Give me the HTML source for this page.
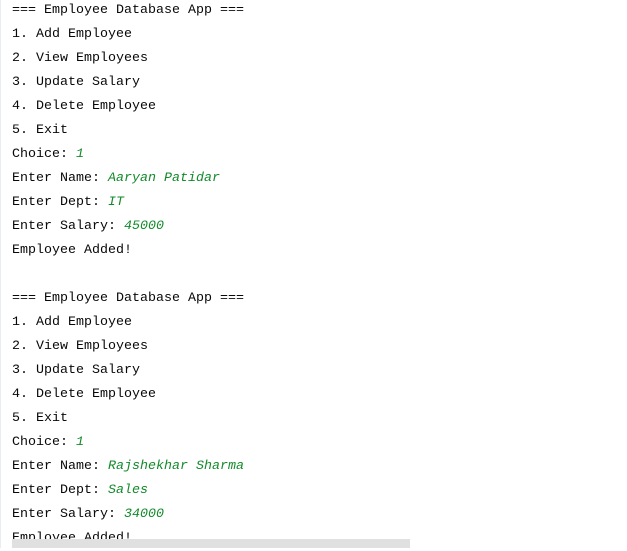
<!DOCTYPE html>
<html><head><style>
html,body{margin:0;padding:0;width:627px;height:548px;overflow:hidden;background:#fff;}
.b{position:absolute;left:0;top:0;width:1px;height:548px;background:#ebecf0;}
pre{position:absolute;left:12px;top:-1px;margin:0;font-family:"Liberation Mono",monospace;font-size:13.33px;line-height:24px;color:#080808;}
i{color:#128a2a;font-style:italic;}
.s{position:absolute;left:12px;top:539px;width:398px;height:9px;background:#e0e0e0;}
</style></head><body>
<div class="b"></div>
<pre>=== Employee Database App ===
1. Add Employee
2. View Employees
3. Update Salary
4. Delete Employee
5. Exit
Choice: <i>1</i>
Enter Name: <i>Aaryan Patidar</i>
Enter Dept: <i>IT</i>
Enter Salary: <i>45000</i>
Employee Added!

=== Employee Database App ===
1. Add Employee
2. View Employees
3. Update Salary
4. Delete Employee
5. Exit
Choice: <i>1</i>
Enter Name: <i>Rajshekhar Sharma</i>
Enter Dept: <i>Sales</i>
Enter Salary: <i>34000</i>
Employee Added!</pre>
<div class="s"></div>
</body></html>
